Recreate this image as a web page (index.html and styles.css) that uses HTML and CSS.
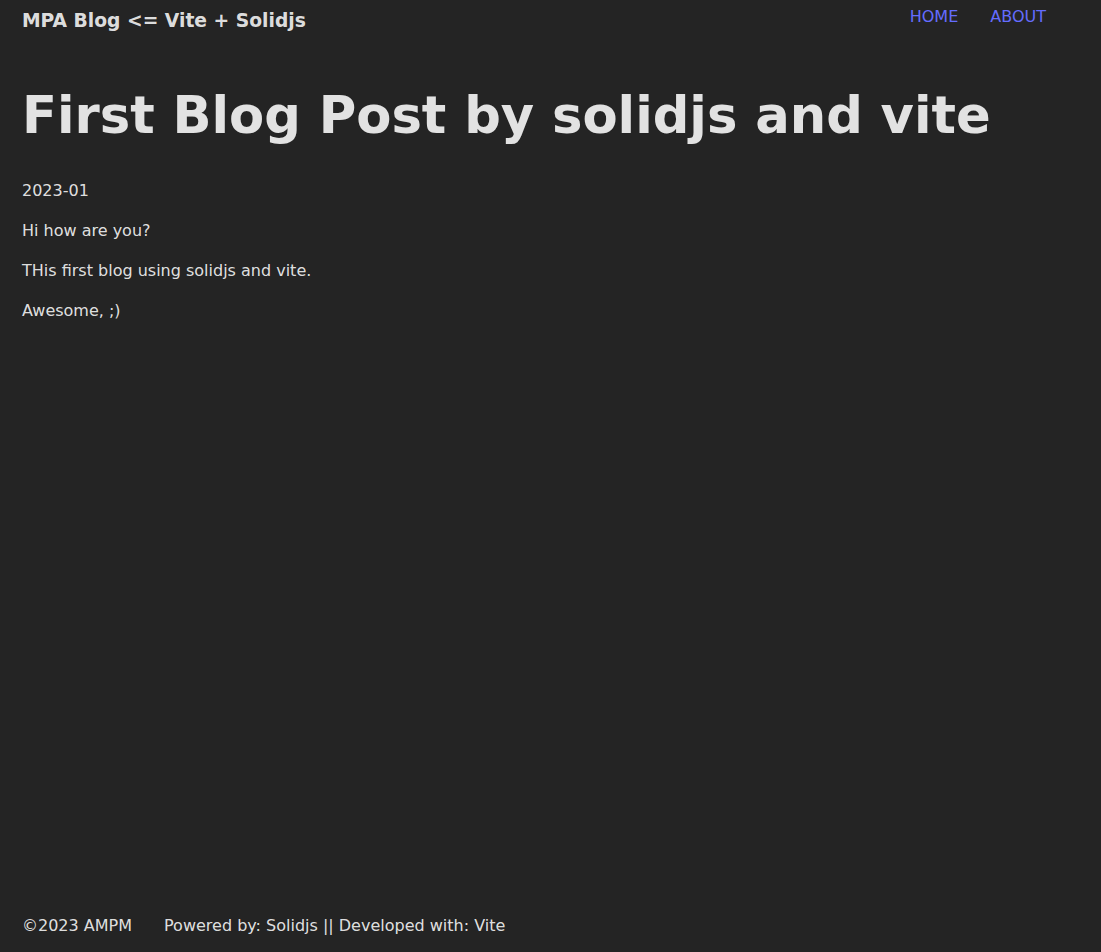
FILE: index.html
```html
<!DOCTYPE html>
<html lang="en">
<head>
<meta charset="utf-8">
<title>MPA Blog</title>
<link rel="stylesheet" href="styles.css">
</head>
<body>
<div class="page">
  <header class="site-header">
    <div class="brand">MPA Blog &lt;= Vite + Solidjs</div>
    <nav class="nav">
      <a href="#" class="nav-link">HOME</a>
      <a href="#" class="nav-link">ABOUT</a>
    </nav>
  </header>
  <main class="content">
    <h1 class="post-title">First Blog Post by solidjs and vite</h1>
    <p class="post-date">2023-01</p>
    <p>Hi how are you?</p>
    <p>THis first blog using solidjs and vite.</p>
    <p>Awesome, ;)</p>
  </main>
  <footer class="site-footer">
    <span>©2023 AMPM</span>
    <span>Powered by: Solidjs || Developed with: Vite</span>
  </footer>
</div>
</body>
</html>
```
FILE: styles.css
```css
html, body {
  margin: 0;
  padding: 0;
}
body {
  background: #242424;
  color: rgba(255, 255, 255, 0.87);
  font-family: "DejaVu Sans", sans-serif;
  font-size: 16px;
  line-height: 1.5;
}
.page {
  min-height: 100vh;
  display: flex;
  flex-direction: column;
  padding: 0 22px;
  box-sizing: border-box;
}
.site-header {
  display: flex;
  justify-content: space-between;
  align-items: flex-start;
  height: 53px;
}
.brand {
  font-weight: bold;
  font-size: 18.72px;
  line-height: 27px;
  margin-top: 7px;
}
.nav {
  display: flex;
  gap: 32px;
  margin-right: 33px;
  margin-top: 5px;
}
.nav-link {
  color: #646cff;
  text-decoration: none;
}
.content {
  flex: 1;
}
.post-title {
  font-size: 51.2px;
  line-height: 1.1;
  margin: 34px 0 36px;
  font-weight: bold;
}
.content p {
  margin: 16px 0;
}
.content .post-date {
  margin-top: 0;
}
.site-footer {
  display: flex;
  gap: 32px;
  padding-bottom: 14px;
}
```
